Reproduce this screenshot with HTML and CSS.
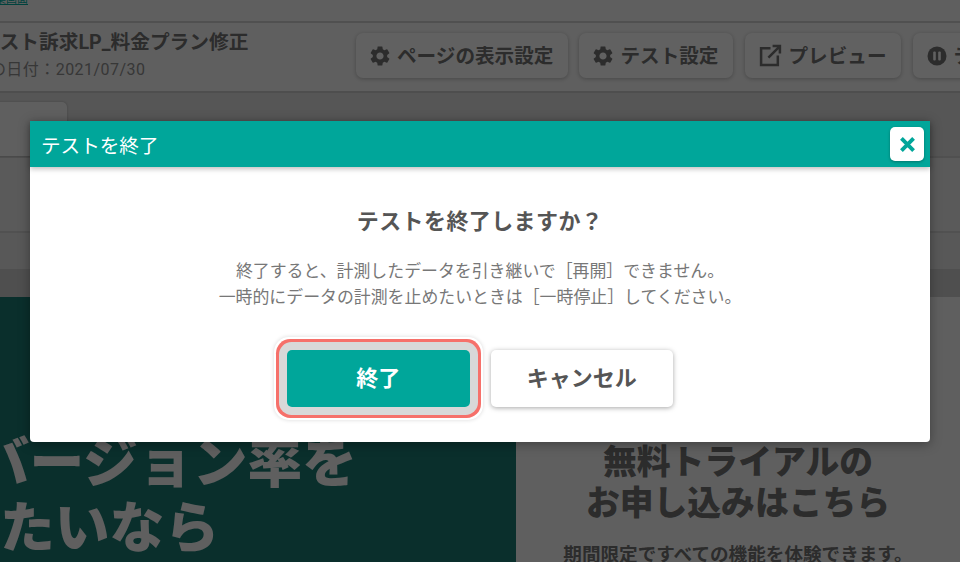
FILE: index.html
```html
<!DOCTYPE html>
<html lang="ja">
<head>
<meta charset="utf-8">
<title>テストを終了</title>
<link rel="stylesheet" href="styles.css">
</head>
<body>
<div class="page">
  <header class="topbar">
    <a class="toplink">編集画面</a>
    <div class="logo">CASSOT</div>
  </header>
  <section class="toolbar">
    <div class="title-block">
      <h1 class="page-title">テスト訴求LP_料金プラン修正</h1>
      <p class="page-date">作成の日付：2021/07/30</p>
    </div>
    <button class="tool-btn">
      <svg class="ico" viewBox="2 2 20 20"><path d="M19.14 12.94c.04-.3.06-.61.06-.94 0-.32-.02-.64-.07-.94l2.03-1.58a.49.49 0 0 0 .12-.61l-1.92-3.32a.488.488 0 0 0-.59-.22l-2.39.96c-.5-.38-1.03-.7-1.62-.94l-.36-2.54a.484.484 0 0 0-.48-.41h-3.84c-.24 0-.43.17-.47.41l-.36 2.54c-.59.24-1.13.57-1.62.94l-2.39-.96c-.22-.08-.47 0-.59.22L2.74 8.87c-.12.21-.08.47.12.61l2.03 1.58c-.05.3-.09.63-.09.94s.02.64.07.94l-2.03 1.58a.49.49 0 0 0-.12.61l1.92 3.32c.12.22.37.29.59.22l2.39-.96c.5.38 1.03.7 1.62.94l.36 2.54c.05.24.24.41.48.41h3.84c.24 0 .44-.17.47-.41l.36-2.54c.59-.24 1.13-.56 1.62-.94l2.39.96c.22.08.47 0 .59-.22l1.92-3.32c.12-.22.07-.47-.12-.61l-2.01-1.58zM12 15.6c-1.98 0-3.6-1.62-3.6-3.6s1.62-3.6 3.6-3.6 3.6 1.62 3.6 3.6-1.62 3.6-3.6 3.6z"/></svg>
      ページの表示設定
    </button>
    <button class="tool-btn">
      <svg class="ico" viewBox="2 2 20 20"><path d="M19.14 12.94c.04-.3.06-.61.06-.94 0-.32-.02-.64-.07-.94l2.03-1.58a.49.49 0 0 0 .12-.61l-1.92-3.32a.488.488 0 0 0-.59-.22l-2.39.96c-.5-.38-1.03-.7-1.62-.94l-.36-2.54a.484.484 0 0 0-.48-.41h-3.84c-.24 0-.43.17-.47.41l-.36 2.54c-.59.24-1.13.57-1.62.94l-2.39-.96c-.22-.08-.47 0-.59.22L2.74 8.87c-.12.21-.08.47.12.61l2.03 1.58c-.05.3-.09.63-.09.94s.02.64.07.94l-2.03 1.58a.49.49 0 0 0-.12.61l1.92 3.32c.12.22.37.29.59.22l2.39-.96c.5.38 1.03.7 1.62.94l.36 2.54c.05.24.24.41.48.41h3.84c.24 0 .44-.17.47-.41l.36-2.54c.59-.24 1.13-.56 1.62-.94l2.39.96c.22.08.47 0 .59-.22l1.92-3.32c.12-.22.07-.47-.12-.61l-2.01-1.58zM12 15.6c-1.98 0-3.6-1.62-3.6-3.6s1.62-3.6 3.6-3.6 3.6 1.62 3.6 3.6-1.62 3.6-3.6 3.6z"/></svg>
      テスト設定
    </button>
    <button class="tool-btn">
      <svg class="ico ico-wide" viewBox="0 0 22 22"><path class="ico-line" d="M11 4H2v16h16v-9M9 13 20 2M13 2h7v7"/></svg>
      プレビュー
    </button>
    <button class="tool-btn">
      <svg class="ico" viewBox="0 0 20 20"><circle cx="10" cy="10" r="9.5"/><rect class="ico-bar" x="6.2" y="5.5" width="2.6" height="9" rx="1"/><rect class="ico-bar" x="11.2" y="5.5" width="2.6" height="9" rx="1"/></svg>
      テストを一時停止
    </button>
  </section>
  <nav class="tabs"><div class="tab"></div></nav>
  <div class="row-light"></div>
  <div class="row-mid"></div>
  <div class="row-strip"></div>
  <main class="hero">
    <div class="hero-left">
      <p class="hero-line hero-line-1">コンバージョン率を</p>
      <p class="hero-line hero-line-2">たいなら</p>
    </div>
    <div class="hero-right">
      <h2 class="cta-title">無料トライアルの<br>お申し込みはこちら</h2>
      <p class="cta-text">期間限定ですべての機能を体験できます。</p>
    </div>
  </main>
</div>
<div class="overlay"></div>
<div class="modal" role="dialog">
  <div class="modal-head">
    <span class="modal-title">テストを終了</span>
    <button class="modal-close" aria-label="閉じる">
      <svg viewBox="0 0 14 14" class="close-ico"><path d="M2 2l10 10M12 2 2 12"/></svg>
    </button>
  </div>
  <div class="modal-body">
    <h2 class="modal-heading">テストを終了しますか？</h2>
    <p class="modal-text">終了すると、計測したデータを引き継いで［再開］できません。<br>一時的にデータの計測を止めたいときは［一時停止］してください。</p>
    <div class="modal-actions">
      <button class="btn btn-primary">終了</button>
      <button class="btn btn-default">キャンセル</button>
    </div>
  </div>
</div>
</body>
</html>
```

FILE: styles.css
```css
* { box-sizing: border-box; }
html, body { margin: 0; padding: 0; }
body {
  width: 960px;
  height: 562px;
  overflow: hidden;
  background: #eee;
  color: #6e6e6e;
  font-family: Roboto, "Noto Sans CJK JP", sans-serif;
}
.page { width: 1180px; margin-left: -20px; }
h1, h2, p { margin: 0; }

.topbar {
  height: 23px;
  border-bottom: 2px solid #c8c8c8;
  overflow: hidden;
  display: flex;
  background: #eee;
}
.toplink {
  margin: -7px 0 0 0;
  height: 14px;
  font-size: 11px;
  line-height: 14px;
  color: #00a69a;
  text-decoration: underline;
  width: 48px;
  white-space: nowrap;
  overflow: hidden;
  text-align: right;
}
.logo {
  margin: -33px 0 0 377px;
  font-size: 40px;
  line-height: 40px;
  font-weight: 900;
  letter-spacing: 2px;
  color: #00a69a;
  font-family: Roboto, sans-serif;
}

.toolbar {
  height: 70px;
  display: flex;
  align-items: flex-start;
  gap: 11.5px;
  padding: 10px 0 0 0;
  border-bottom: 2px solid #c4c4c4;
  background: #eee;
}
.title-block { width: 364.5px; }
.page-title { margin-top: -3px; font-size: 19.7px; line-height: 26px; font-weight: 700; color: #6e6e6e; white-space: nowrap; }
.page-date { margin-top: 3px; margin-left: -23px; font-size: 16px; line-height: 22px; letter-spacing: .45px; color: #8a8a8a; white-space: nowrap; }

.tool-btn {
  height: 45px;
  display: flex;
  align-items: center;
  gap: 7px;
  padding: 0 14.6px 3px 14px;
  border: 0;
  border-radius: 7px;
  background: #f2f2f2;
  box-shadow: 0 1px 4px rgba(0,0,0,.25);
  color: #6e6e6e;
  font: 700 19.6px Roboto, "Noto Sans CJK JP", sans-serif;
  white-space: nowrap;
}
.ico { width: 20px; height: 20px; fill: #6e6e6e; flex: none; margin-top: 3px; }
.ico-wide { width: 23px; height: 23px; }
.ico-line { fill: none; stroke: #6e6e6e; stroke-width: 2.4; }
.ico-bar { fill: #f2f2f2; }

.tabs { height: 65px; padding-top: 9px; background: #d6d6d6; border-bottom: 2px solid #c8c8c8; }
.tab {
  width: 87px;
  height: 54px;
  background: #eee;
  border-radius: 0 5px 0 0;
  box-shadow: 0 0 2px rgba(0,0,0,.25);
}
.row-light { height: 75px; background: #e2e2e2; border-bottom: 2px solid #cacaca; }
.row-mid { height: 36px; background: #dcdcdc; }
.row-strip { height: 28px; background: #c6c6c6; }

.hero { display: flex; height: 265px; }
.hero-left {
  width: 536px;
  background: #19766f;
  overflow: hidden;
  padding-top: 134px;
  color: #eee;
  font-size: 54.8px;
  line-height: 65px;
  font-weight: 900;
  white-space: nowrap;
}
.hero-line-1 { margin-left: -115px; }
.hero-line-2 { margin-left: 20px; }
.hero-right { flex: none; width: 444px; text-align: center; padding-top: 145px; background: #eee; }
.cta-title { font-size: 33.8px; line-height: 41px; font-weight: 900; color: #6e6e6e; }
.cta-text { margin-top: 18px; font-size: 18.6px; line-height: 26px; font-weight: 700; color: #6e6e6e; white-space: nowrap; }

.overlay { position: absolute; inset: 0; background: rgba(0,0,0,.6); }

.modal {
  position: absolute;
  left: 30px;
  top: 121px;
  width: 900px;
  height: 321px;
  background: #fff;
  border-radius: 0 0 4px 4px;
  box-shadow: 0 2px 12px rgba(0,0,0,.35);
}
.modal-head {
  height: 46px;
  display: flex;
  align-items: center;
  justify-content: space-between;
  padding: 0 6px 0 12px;
  background: #00a69a;
  box-shadow: 0 2px 5px rgba(0,0,0,.25);
}
.modal-title { color: #fff; font-size: 19.6px; margin-left: -1px; }
.modal-close {
  width: 34px;
  height: 34px;
  padding: 0;
  border: 0;
  border-radius: 5px;
  background: #fff;
  display: flex;
  align-items: center;
  justify-content: center;
  box-shadow: 0 1px 3px rgba(0,0,0,.3);
}
.close-ico { width: 17px; height: 17px; fill: none; stroke: #00a69a; stroke-width: 3.2; }
.modal-body { text-align: center; padding-top: 40px; }
.modal-heading { font-size: 22px; line-height: 30px; font-weight: 700; letter-spacing: .4px; color: #555; }
.modal-text { margin-top: 21px; font-size: 16.9px; line-height: 26px; color: #777; }
.modal-actions { display: flex; justify-content: center; gap: 21px; margin-top: 40px; }
.btn {
  width: 182.6px;
  height: 57px;
  padding: 0 0 5px;
  border: 0;
  border-radius: 5px;
  font: 700 22px Roboto, "Noto Sans CJK JP", sans-serif;
}
.btn-primary {
  background: #00a69a;
  color: #fff;
  box-shadow: 0 0 0 8px #d8d8d8, 0 0 0 11px #f6706a, 0 0 0 13px #fff, 0 0 4px 13px rgba(0,0,0,.15);
}
.btn-default { background: #fff; color: #555; box-shadow: 0 1px 5px rgba(0,0,0,.35); }
```
